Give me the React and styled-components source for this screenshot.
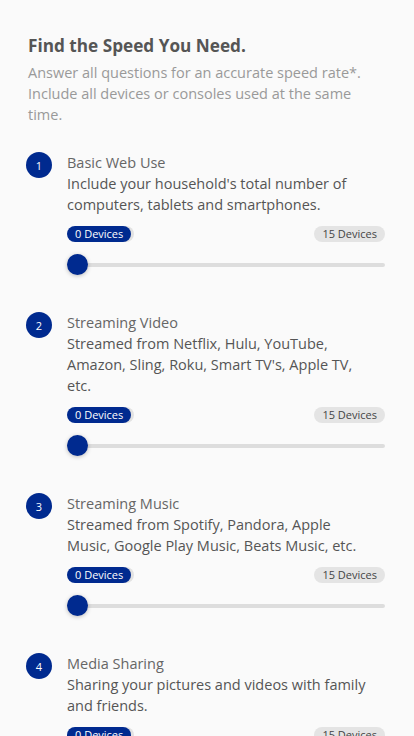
import React from 'react';
import styled, { createGlobalStyle } from 'styled-components';

const GlobalStyle = createGlobalStyle`
  body {
    margin: 0;
    background: #fafafa;
    font-family: "Open Sans", "Noto Sans", sans-serif;
  }
`;

const questions = [
  {
    title: 'Basic Web Use',
    text: "Include your household's total number of computers, tablets and smartphones.",
  },
  {
    title: 'Streaming Video',
    text: "Streamed from Netflix, Hulu, YouTube, Amazon, Sling, Roku, Smart TV's, Apple TV, etc.",
  },
  {
    title: 'Streaming Music',
    text: 'Streamed from Spotify, Pandora, Apple Music, Google Play Music, Beats Music, etc.',
  },
  {
    title: 'Media Sharing',
    text: 'Sharing your pictures and videos with family and friends.',
  },
];

const App = () => {
  return (
    <Page>
      <GlobalStyle />
      <Title>Find the Speed You Need.</Title>
      <Intro>
        Answer all questions for an accurate speed rate*. Include all devices or consoles used at the same time.
      </Intro>
      <List>
        {questions.map((q, i) => (
          <Question key={q.title}>
            <Step>{i + 1}</Step>
            <Body>
              <QTitle>{q.title}</QTitle>
              <QText>{q.text}</QText>
              <Labels>
                <Pill active>0 Devices</Pill>
                <Pill>15 Devices</Pill>
              </Labels>
              <Slider>
                <Track />
                <Thumb />
              </Slider>
            </Body>
          </Question>
        ))}
      </List>
    </Page>
  );
};

export default App;

const Page = styled.div`
  padding: 34px 29px 0 28px;
  height: 736px;
  box-sizing: border-box;
  overflow: hidden;
`;

const Title = styled.h1`
  margin: 0;
  font-size: 17.2px;
  line-height: 24px;
  font-weight: 700;
  color: #555;
`;

const Intro = styled.p`
  margin: 4px 0 0;
  font-size: 14.5px;
  line-height: 21px;
  color: #999;
`;

const List = styled.div`
  margin-top: 27px;
  display: flex;
  flex-direction: column;
  gap: 37px;
`;

const Question = styled.div`
  display: flex;
  align-items: flex-start;
`;

const Step = styled.div`
  flex: none;
  width: 26px;
  height: 26px;
  border-radius: 50%;
  background: #002a8f;
  color: #fff;
  font-size: 11px;
  display: flex;
  align-items: center;
  justify-content: center;
  margin: 0 15px 0 -2px;
`;

const Body = styled.div`
  flex: 1;
`;

const QTitle = styled.div`
  font-size: 14.5px;
  line-height: 21px;
  color: #666;
`;

const QText = styled.div`
  font-size: 14.5px;
  line-height: 21px;
  color: #555;
  padding-right: 14px;
`;

const Labels = styled.div`
  display: flex;
  justify-content: space-between;
  margin-top: 11px;
`;

const Pill = styled.span`
  height: 16px;
  line-height: 16px;
  padding: 0 8px;
  border-radius: 8px;
  font-size: 11px;
  color: ${(p) => (p.active ? '#fff' : '#444')};
  background: ${(p) => (p.active ? '#002a8f' : '#e4e4e4')};
  box-shadow: ${(p) => (p.active ? '3px 0 0 #e2e2e2' : 'none')};
`;

const Slider = styled.div`
  position: relative;
  height: 21px;
  margin-top: 12px;
  display: flex;
  align-items: center;
`;

const Track = styled.div`
  width: 100%;
  height: 4px;
  border-radius: 2px;
  background: #ddd;
`;

const Thumb = styled.div`
  position: absolute;
  left: 0;
  top: 0;
  width: 21px;
  height: 21px;
  border-radius: 50%;
  background: #002a8f;
  box-shadow: 0 1px 4px rgba(0, 0, 0, 0.25);
`;
